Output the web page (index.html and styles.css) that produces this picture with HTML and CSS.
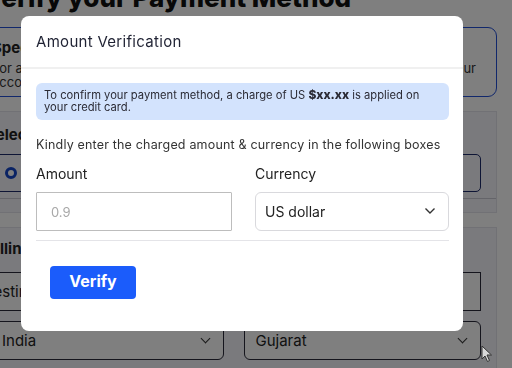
FILE: index.html
```html
<!DOCTYPE html>
<html lang="en">
<head>
    <meta charset="UTF-8">
    <meta name="viewport" content="width=device-width, initial-scale=1.0">
    <title>Verify your Payment Method</title>
    <link rel="stylesheet" href="styles.css">
</head>
<body>
    <!-- page behind the modal -->
    <div class="page">
        <h1 class="page-title">Verify your Payment Method</h1>

        <div class="method-card">
            <div class="method-name">Specific payment method</div>
            <div class="method-desc">
                <div class="desc-line"><span>For a verified account, add a payment method</span><span>to your</span></div>
                <div class="desc-line"><span>account</span></div>
            </div>
        </div>

        <div class="panel select-panel">
            <div class="panel-title">Select payment method</div>
            <div class="option-box">
                <span class="radio"></span>
                <span class="option-text">Credit card</span>
            </div>
            <div class="panel-rule"></div>
        </div>

        <div class="panel billing-panel">
            <div class="panel-title">Billing address</div>
            <div class="fake-input">Testing street</div>
            <div class="row-2">
                <div class="fake-select">India <span class="chev"></span></div>
                <div class="fake-select">Gujarat <span class="chev"></span></div>
            </div>
        </div>
    </div>

    <!-- overlay + modal -->
    <div class="overlay">
        <div class="modal">
            <div class="modal-header">Amount Verification</div>
            <div class="modal-body">
                <div class="info-box">
                    To confirm your payment method, a charge of US <b>$xx.xx</b> is applied on your credit card.
                </div>
                <p class="hint">Kindly enter the charged amount &amp; currency in the following boxes</p>

                <div class="field-row">
                    <div class="field">
                        <label for="amount">Amount</label>
                        <input type="text" id="amount" class="amount-input" placeholder="0.9">
                    </div>
                    <div class="field">
                        <label>Currency</label>
                        <div class="currency-select">
                            <span>US dollar</span>
                            <svg width="12" height="8" viewBox="0 0 12 8"><path d="M1.5 1.5 L6 6 L10.5 1.5" fill="none" stroke="#333" stroke-width="1.4"/></svg>
                        </div>
                    </div>
                </div>
                <div class="divider"></div>
                <button class="verify-btn">Verify</button>
            </div>
        </div>
    </div>

    <!-- mouse pointer -->
    <svg class="cursor" width="12" height="18" viewBox="0 0 12 18"><path d="M1 1 L1 14 L4 11 L6.5 16.5 L8.5 15.5 L6 10 L10.5 10 Z" fill="#d8d8d8" stroke="#333" stroke-width="1"/></svg>
</body>
</html>
```

FILE: styles.css
```css
* {
    margin: 0;
    padding: 0;
    box-sizing: border-box;
}

html, body {
    height: 368px;
    overflow: hidden;
}

body {
    font-family: 'Inter', 'Liberation Sans', sans-serif;
    background-color: #fff;
    color: #222;
}

/* page behind the overlay */
.page {
    width: 527px;
    margin: -18px 0 0 -30px;
}

.page-title {
    font-size: 26px;
    font-weight: 800;
    line-height: 32px;
    padding-left: 13px;
    color: #111;
}

.method-card {
    margin-top: 13px;
    height: 70px;
    border: 1.5px solid #2350d8;
    border-radius: 9px;
    padding: 10px 20px 0 21px;
}

.method-name {
    font-size: 15px;
    font-weight: 700;
}

.method-desc {
    margin-top: 4px;
    font-size: 13px;
    line-height: 14px;
    color: #333;
}

.desc-line {
    display: flex;
    justify-content: space-between;
}

.panel {
    background-color: #f4f4fa;
    border: 1px solid #e2e2ea;
    padding: 0 15px;
}

.select-panel {
    margin-top: 14px;
    height: 102px;
    padding-top: 14px;
}

.panel-title {
    font-size: 15px;
    font-weight: 700;
    line-height: 18px;
}

.option-box {
    margin-top: 10px;
    height: 38px;
    border: 1px solid #1d2a6b;
    border-radius: 5px;
    display: flex;
    align-items: center;
    padding-left: 18px;
    gap: 10px;
}

.radio {
    width: 12px;
    height: 12px;
    border: 3px solid #1446c8;
    border-radius: 50%;
    background: #fff;
}

.option-text {
    font-size: 14px;
}

.panel-rule {
    margin: 6px -15px 0;
    border-top: 1px solid #c9c9d2;
}

.billing-panel {
    margin-top: 14px;
    height: 160px;
    padding-top: 12px;
}

.fake-input {
    margin-top: 14px;
    height: 39px;
    border: 1px solid #2a2a3a;
    background: #fff;
    padding: 0;
    text-indent: -2px;
    display: flex;
    align-items: center;
    font-size: 15px;
}

.row-2 {
    margin-top: 10px;
    display: grid;
    grid-template-columns: 1fr 1fr;
    gap: 20px;
}

.fake-select {
    height: 39px;
    border: 1px solid #2a2a3a;
    border-radius: 6px;
    background: #fff;
    display: flex;
    align-items: center;
    justify-content: space-between;
    padding: 0 14px 0 15px;
    font-size: 15px;
}

.fake-select + .fake-select {
    padding-left: 11px;
}

.chev {
    width: 7px;
    height: 7px;
    border-right: 1.5px solid #333;
    border-bottom: 1.5px solid #333;
    transform: rotate(45deg);
    margin-top: -4px;
}

/* overlay and modal */
.overlay {
    position: fixed;
    top: 0;
    left: 0;
    right: 0;
    bottom: 0;
    background: rgba(0, 0, 0, 0.5);
    padding: 16px 0 0 21px;
}

.modal {
    width: 442px;
    height: 315px;
    background-color: #fff;
    border-radius: 8px;
    overflow: hidden;
}

.modal-header {
    height: 53px;
    padding: 0 15px;
    display: flex;
    align-items: center;
    font-size: 15px;
    color: #1f2233;
    letter-spacing: 0.3px;
    border-bottom: 2px solid #f0f0f0;
}

.modal-body {
    padding: 14px 14px 0 15px;
}

.info-box {
    background-color: #d3e3fd;
    border-radius: 6px;
    padding: 6px 8px 5px;
    font-size: 11.2px;
    line-height: 12px;
    color: #2b2b35;
    height: 37px;
}

.info-box b {
    font-weight: 800;
    font-size: 12px;
}

.hint {
    margin-top: 17px;
    font-size: 12.5px;
    letter-spacing: 0.18px;
    line-height: 16px;
    color: #333;
}

.field-row {
    margin-top: 12px;
    display: grid;
    grid-template-columns: 196px 194px;
    column-gap: 23px;
}

.field label {
    display: block;
    font-size: 14px;
    line-height: 18px;
    color: #222;
    margin-bottom: 9px;
}

.amount-input {
    width: 100%;
    height: 39px;
    border: 1px solid #bdbdbd;
    border-radius: 1px;
    padding: 0 14px;
    font-family: inherit;
    font-size: 13px;
    outline: none;
}

.amount-input::placeholder {
    color: #a8a8a8;
}

.currency-select {
    height: 39px;
    border: 1px solid #d9d9dd;
    border-radius: 6px;
    display: flex;
    align-items: center;
    justify-content: space-between;
    padding: 0 12px 1px 9px;
    font-size: 14px;
    color: #222;
}

.divider {
    margin-top: 9px;
    border-top: 1px solid #e4e4e8;
}

.verify-btn {
    margin: 25px 0 0 14px;
    width: 86px;
    height: 33px;
    background-color: #1b5cfb;
    color: #fff;
    font-family: inherit;
    font-size: 16px;
    font-weight: 700;
    border: none;
    border-radius: 4px;
    padding-bottom: 3px;
    cursor: pointer;
}

.cursor {
    position: fixed;
    left: 481px;
    top: 345px;
}
```
